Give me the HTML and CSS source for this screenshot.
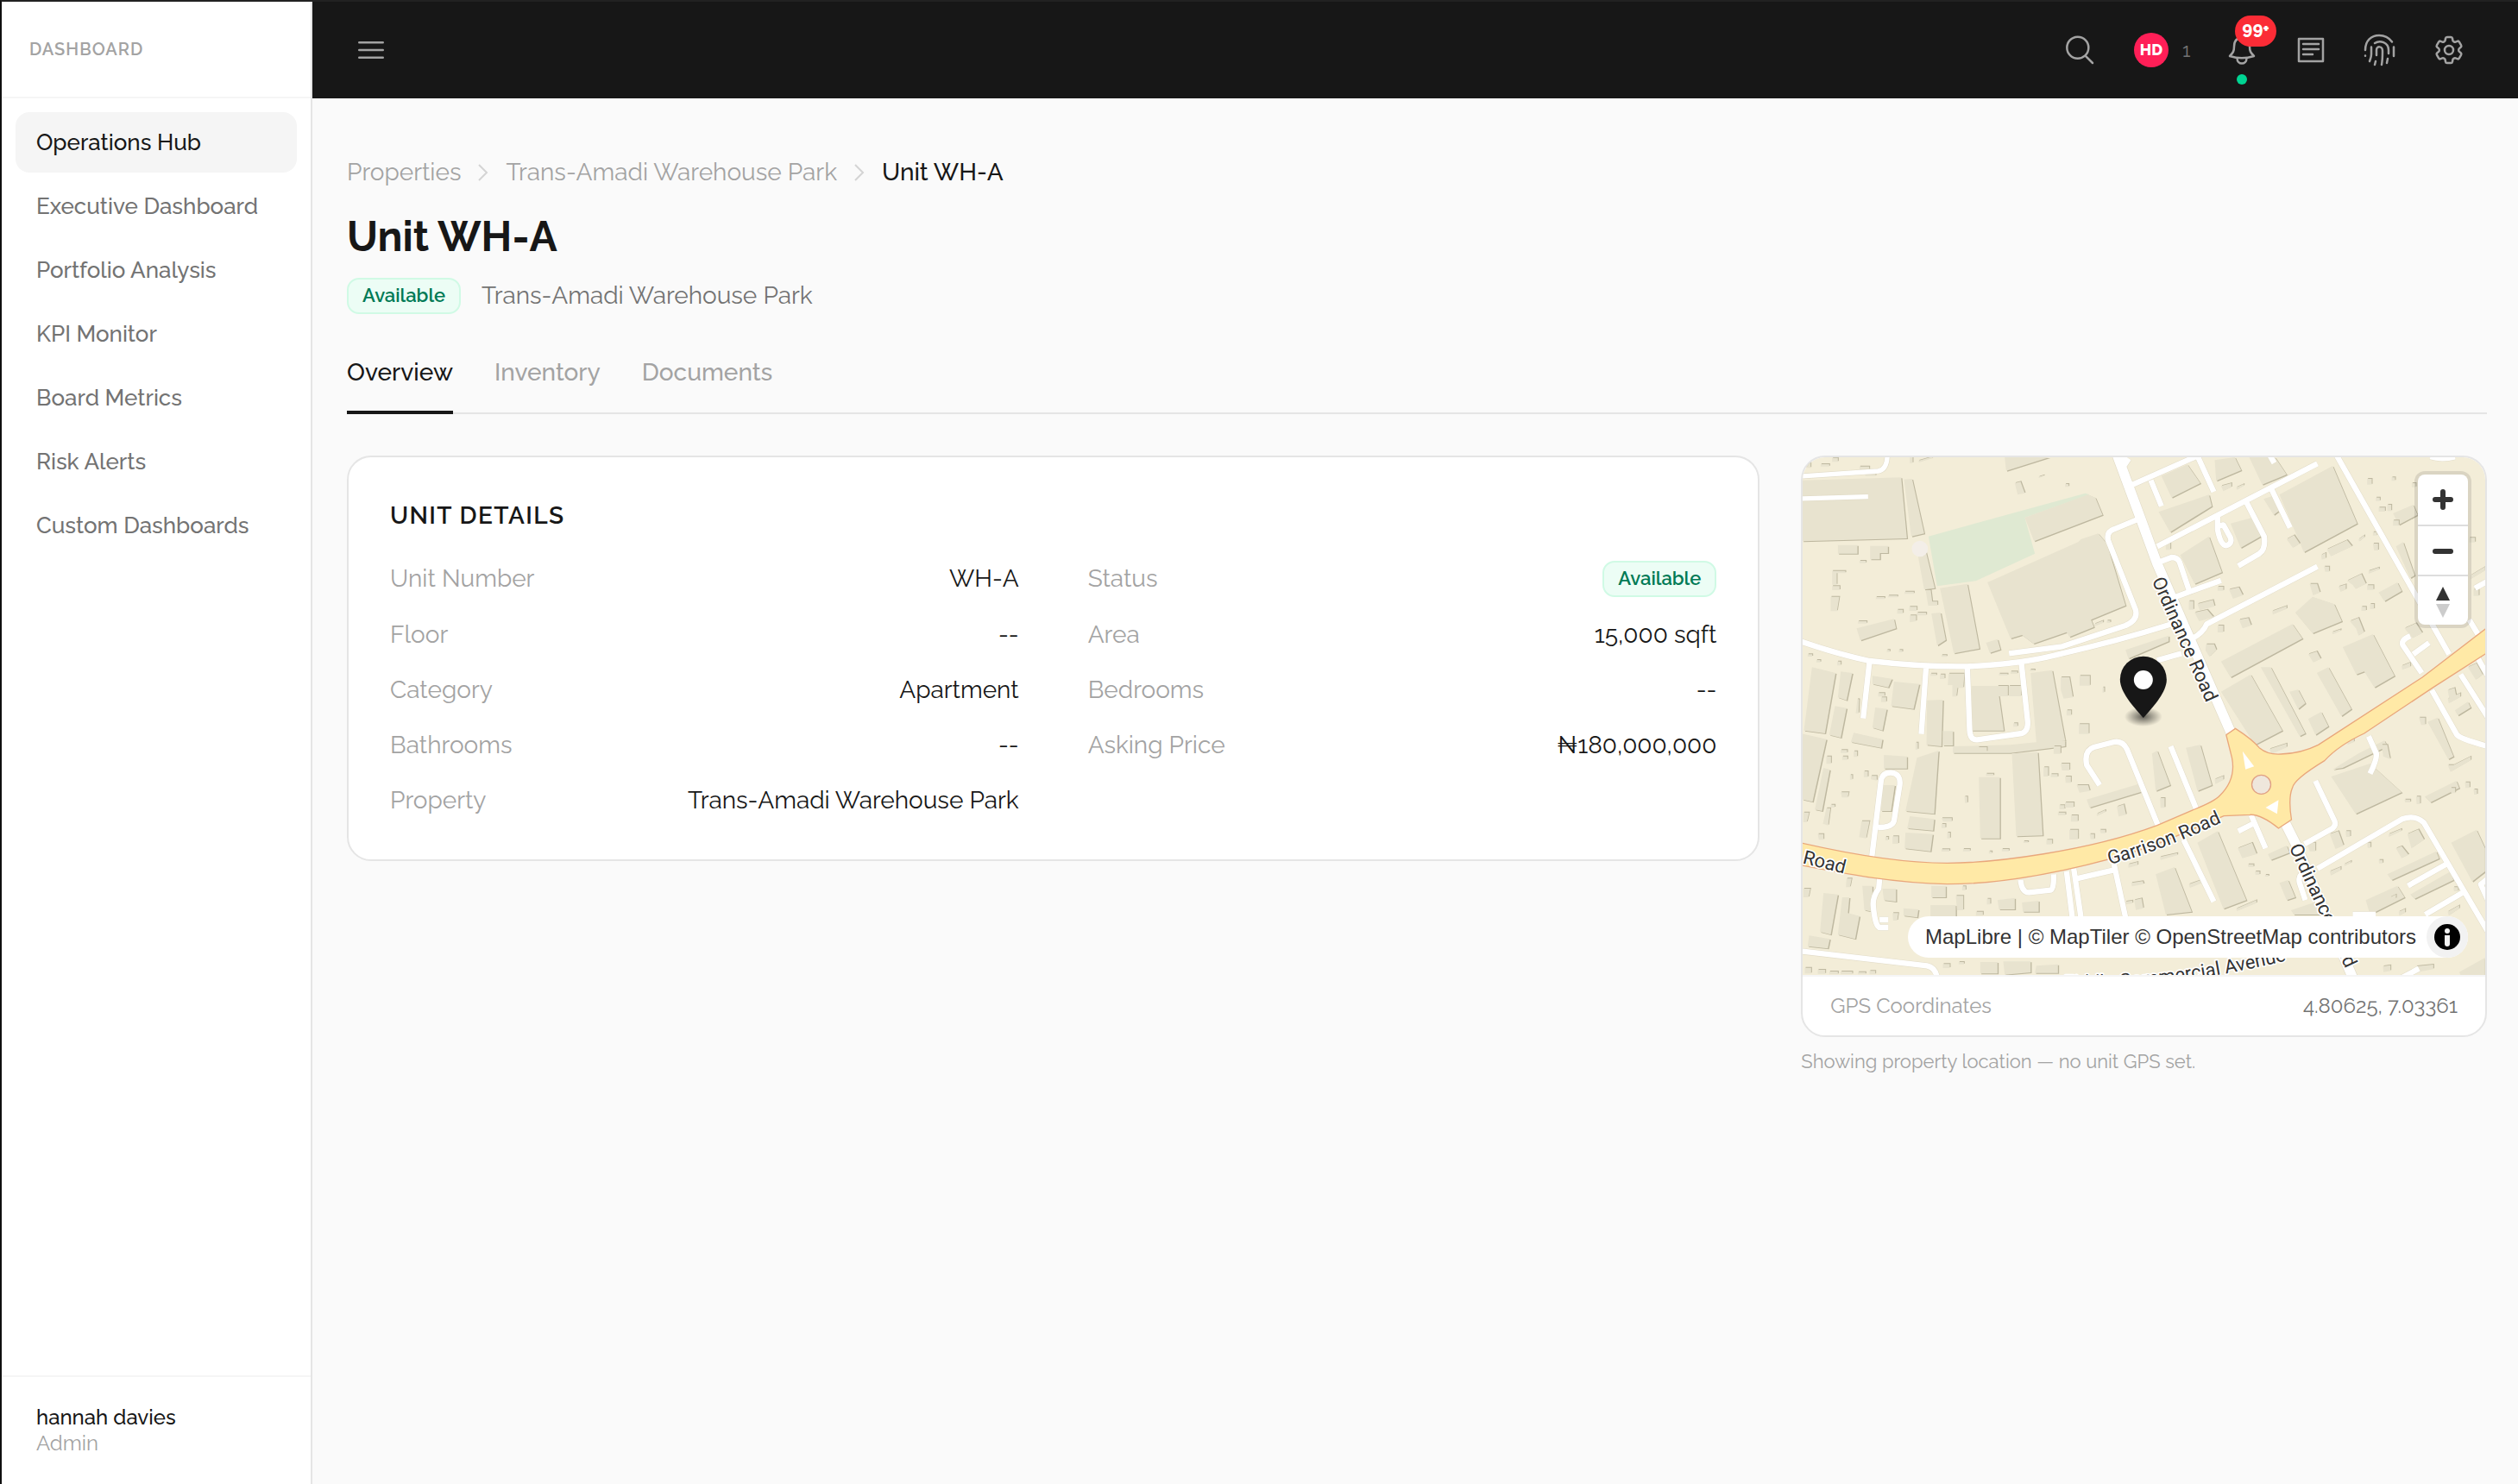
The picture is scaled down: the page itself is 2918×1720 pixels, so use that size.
FILE: index.html
```html
<!DOCTYPE html>
<html lang="en">
<head>
<meta charset="utf-8">
<meta name="viewport" content="width=device-width, initial-scale=1">
<title>Unit WH-A</title>
<link rel="stylesheet" href="styles.css">
</head>

<body>
<aside class="sidebar">
	<div class="sidebar-title">DASHBOARD</div>
	<nav class="menu">
		<a class="active" href="#">Operations Hub</a>
		<a href="#">Executive Dashboard</a>
		<a href="#">Portfolio Analysis</a>
		<a href="#">KPI Monitor</a>
		<a href="#">Board Metrics</a>
		<a href="#">Risk Alerts</a>
		<a href="#">Custom Dashboards</a>
	</nav>
	<div class="user">
		<div class="user-name">hannah davies</div>
		<div class="user-role">Admin</div>
	</div>
</aside>

<div class="page">
	<header class="topbar">
		<button class="icon-btn" type="button" aria-label="Toggle menu"><svg viewBox="0 0 24 24"><path d="M3.75 6.75h16.5M3.75 12h16.5M3.75 17.25h16.5"/></svg></button>
		<div class="tools">
			<button class="icon-btn" type="button" aria-label="Search"><svg viewBox="0 0 24 24"><path d="m21 21-5.2-5.2A7.5 7.5 0 1 0 5.2 5.2a7.5 7.5 0 0 0 10.6 10.6z"/></svg></button>
			<div class="online"><span class="avatar">HD</span><span class="online-count">1</span></div>
			<button class="icon-btn" type="button" aria-label="Notifications">
				<svg class="big-box" viewBox="0 0 40 40"><path d="M20 6c-6 0-9 4-9 10 0 5-1 7-5 11 9 3 19 3 28 0-4-4-5-6-5-11 0-6-3-10-9-10z"/><path d="M14.5 29.5c0 8 11 8 11 0"/></svg>
				<span class="badge">99<sup>+</sup></span>
				<span class="dot"></span>
			</button>
			<button class="icon-btn" type="button" aria-label="News"><svg class="big-box" viewBox="0 0 40 40"><path d="M6 7h28v26H6zM11 13h18M11 19h18M11 25h11"/></svg></button>
			<button class="icon-btn" type="button" aria-label="Sign in activity"><svg class="big-box" viewBox="0 0 40 40"><path d="M3 20C3 9 10 3 19 3c6 0 11 2 15 7.5M3 26.6v.2M36 16.5V27M14 12c6-4 16-1 16 8v4M29 30l-1 5M10 16.5V25c0 3-1 5-2 8M16 26v-6c0-5 7-5 7 1 0 6 0 11-1 16M15 33l-1 4"/></svg></button>
			<button class="icon-btn" type="button" aria-label="Settings"><svg viewBox="0 0 24 24"><path d="M9.594 3.94c.09-.542.56-.94 1.11-.94h2.593c.55 0 1.02.398 1.11.94l.213 1.281c.063.374.313.686.645.87.074.04.147.083.22.127.325.196.72.257 1.075.124l1.217-.456a1.125 1.125 0 0 1 1.37.49l1.296 2.247a1.125 1.125 0 0 1-.26 1.431l-1.003.827c-.293.241-.438.613-.43.992a7.723 7.723 0 0 1 0 .255c-.008.378.137.75.43.991l1.004.827c.424.35.534.955.26 1.43l-1.298 2.247a1.125 1.125 0 0 1-1.369.491l-1.217-.456c-.355-.133-.75-.072-1.076.124a6.47 6.47 0 0 1-.22.128c-.331.183-.581.495-.644.869l-.213 1.281c-.09.543-.56.94-1.11.94h-2.594c-.55 0-1.019-.398-1.11-.94l-.213-1.281c-.062-.374-.312-.686-.644-.87a6.52 6.52 0 0 1-.22-.127c-.325-.196-.72-.257-1.076-.124l-1.217.456a1.125 1.125 0 0 1-1.369-.49l-1.297-2.247a1.125 1.125 0 0 1 .26-1.431l1.004-.827c.292-.24.437-.613.43-.991a6.932 6.932 0 0 1 0-.255c.007-.38-.138-.751-.43-.992l-1.004-.827a1.125 1.125 0 0 1-.26-1.43l1.297-2.247a1.125 1.125 0 0 1 1.37-.491l1.216.456c.356.133.751.072 1.076-.124.072-.044.146-.086.22-.128.332-.183.582-.495.644-.869l.214-1.28Z"/><circle cx="12" cy="12" r="3"/></svg></button>
		</div>
	</header>

	<main>
		<nav class="crumbs" aria-label="Breadcrumb">
			<a href="#">Properties</a>
			<svg viewBox="0 0 12 20"><path d="M1 1l9 9-9 9"/></svg>
			<a href="#">Trans-Amadi Warehouse Park</a>
			<svg viewBox="0 0 12 20"><path d="M1 1l9 9-9 9"/></svg>
			<span>Unit WH-A</span>
		</nav>
		<h1>Unit WH-A</h1>
		<div class="subtitle"><span class="status">Available</span><span>Trans-Amadi Warehouse Park</span></div>

		<div class="tabs" role="tablist">
			<button class="active" type="button" role="tab">Overview</button>
			<button type="button" role="tab">Inventory</button>
			<button type="button" role="tab">Documents</button>
		</div>

		<div class="columns">
			<section class="card details">
				<h2>UNIT DETAILS</h2>
				<dl>
					<div><dt>Unit Number</dt><dd>WH-A</dd></div>
					<div><dt>Status</dt><dd><span class="status">Available</span></dd></div>
					<div><dt>Floor</dt><dd>--</dd></div>
					<div><dt>Area</dt><dd>15,000 sqft</dd></div>
					<div><dt>Category</dt><dd>Apartment</dd></div>
					<div><dt>Bedrooms</dt><dd>--</dd></div>
					<div><dt>Bathrooms</dt><dd>--</dd></div>
					<div><dt>Asking Price</dt><dd>₦180,000,000</dd></div>
					<div><dt>Property</dt><dd>Trans-Amadi Warehouse Park</dd></div>
				</dl>
			</section>

			<section class="location">
				<div class="card">
					<div class="map">
						<svg class="tiles" viewBox="57 60 2373 1800" preserveAspectRatio="xMidYMid slice">
							<defs>
								<radialGradient id="pinShadow"><stop offset="0" stop-color="#000" stop-opacity=".6"/><stop offset="1" stop-color="#000" stop-opacity="0"/></radialGradient>
								<!-- large buildings -->
								<g id="blocks">
									<path d="M57 140L400 130 420 342 57 352zM410 137L438 135 480 325 435 335zM180 365h68v30h-68zM292 368h62v25h-28v22h-34zM458 400L485 385 517 515 480 520zM535 515L630 500 672 725 583 742z"/>
									<path d="M700 495L1015 355 1025 345 1085 325 1115 360 1180 575 1060 625 1070 650 985 685 975 668 860 708 820 678 780 690zM830 270L1050 190 1075 200 1100 260 862 352zM245 655L375 622 382 655 258 697zM505 603L537 600 555 695 525 715zM760 60H915L765 107z"/>
									<path d="M90 790L172 810 135 1020 62 1010zM190 805L230 810 210 905 180 895zM170 925L210 932 190 1035 150 1025zM375 840L463 848 443 935 365 925zM645 855H735L757 1010H645zM850 810L925 800 970 1045 870 1050zM490 905L545 903 540 1065 488 1060zM695 705L735 692 745 728 708 740zM300 820L368 830 355 860 300 848zM310 930L350 935 335 1010 300 1000zM235 1018L335 1040 330 1070 225 1050zM545 1012h35v50h-35zM580 1065L780 1060 970 1040V1065L780 1088H580z"/>
									<path d="M50 1020L140 1040 92 1258 57 1250zM455 1105L530 1080 515 1300 415 1290zM670 1172H743V1385H675zM785 1090L875 1085 892 1375 800 1378zM340 1095L420 1100V1142H340zM335 1200L378 1200 365 1290 330 1290zM130 1140L152 1146 125 1290 100 1285zM130 1575L180 1580 155 1720 118 1710zM195 1590H220L215 1645 255 1655 240 1735 180 1720zM335 1560H382V1605L340 1600zM80 1723L152 1735 145 1768 75 1760zM502 1617H590V1660H502zM505 1550h50v40h-50zM735 1600l60-8v40h-55zM820 1608l58-6v38h-55zM1045 1250L1230 1195 1240 1222 1055 1278zM415 1365l95 5-8 60-90-10zM430 1308l85 10-4 40-90-8zM265 1550h35v90l-28-6zM408 1628l52 4-4 28-48-6zM675 1815h60v40h-60zM755 1813h95v38l-90 8zM870 1828l75-5v30h-80z"/>
									<path d="M1305 125L1395 85 1440 150 1340 200zM1490 70L1560 60 1582 105 1495 142zM1715 190L1900 90 1985 290 1800 390zM1370 400L1470 335 1515 460 1420 500zM1512 770L1760 640 1795 690 1545 825zM1512 875L1615 815 1725 1010 1630 1060zM1650 790L1685 790 1805 1020 1785 1030zM1845 810L1885 790 1965 935 1930 960zM1935 720L2040 675 2115 820 2045 860 2010 805 1982 815zM1770 600L1830 545 1905 570 1932 630 1830 672zM2230 980L2265 965 2320 1100 2302 1110zM1295 250L1470 190 1480 230 1335 320zM1610 60H1700L1740 120 1655 155zM1545 290L1620 270 1650 335 1580 375zM1750 875L1780 868 1805 915 1780 935zM2110 255L2180 225 2195 260 2130 295zM2120 370L2145 355 2185 470 2170 480zM2060 530L2125 495 2140 525 2080 560zM1815 970L1860 945 1885 995 1840 1025zM1660 205L1690 195 1715 245 1695 260zM2325 940L2370 910 2380 930 2335 958zM1180 730L1330 680V700L1190 760z"/>
									<path d="M2312 1400L2400 1355 2430 1420 2430 1500 2385 1535zM1895 1170L2030 1125 2140 1225 1980 1300zM1430 1400L1500 1360 1600 1600 1520 1630zM1285 1510L1350 1485 1410 1640 1320 1650zM1390 1070L1440 1060 1480 1200 1430 1220zM1272 1090L1290 1080 1335 1200 1285 1220zM1755 1635L1860 1600 1870 1650H1765zM2090 1510L2260 1430 2270 1455 2105 1530zM2170 1580L2310 1500 2320 1530 2185 1595zM2015 1600L2125 1550 2150 1590 2030 1650zM1900 1145L1990 1090 2080 1045 2090 1065 1935 1140zM2340 1850L2430 1800V1860H2345zM1675 1440L1740 1410 1750 1435 1685 1460zM2220 1240L2330 1185 2340 1210 2240 1260zM1715 1540L1745 1530 1770 1590 1740 1600z"/>
								</g>
								<!-- sheds and small houses -->
								<g id="houses">
									<path d="M65 72h20v25h-20zM120 84h30v8h-30zM160 62h20v14h-20zM255 92h34v12h-34zM275 115h36v10h-36zM430 60h10v20h-10zM460 72l48-14v6l-46 14zM795 150l20-5 15 40-25 5zM878 128l18-6v4l-18 6zM970 153h12v10h-12zM255 420h22v8h-22zM160 455h46v8h-30v40h-16zM160 508h26v14h-26zM155 545h30l-8 50h-22zM312 546h30v7h-30zM355 541h32v6h-32zM412 527h32v8h-32zM485 522h18l5 40h18v14h-32zM386 590h20v14h-20zM428 580h26v14h-26zM430 610h22v20l-22 4zM455 600h32v10h-32zM250 630h30v8h-30zM1072 640l30-12v8l-30 12zM1115 628h12v8h-12z"/>
									<path d="M75 745h16v8h-16zM105 765h14v8h-14zM178 770h12v14h-12zM350 730h10v7h-10zM392 730h12v8h-12zM540 748h18v6h-18zM502 812h20v8h-20zM535 815h16v16h-16zM565 812h55l-4 50h-20l-4 30h-14v-40h-16zM740 812h30v6h-30zM780 805h24v8h-24zM848 798h16v6h-16zM248 900l-6 50h10l2-48zM320 880h22v12h-22zM330 895h18v16h-18zM735 855h36v36h-36zM775 855h42v36h-42zM955 825h30l12 70-32 4-10-30zM1020 820h36v34h-36zM975 940h16v18h-16zM1018 988h34v34h-34zM1100 860h6v18h-6zM790 985h14v12h-14zM930 1065h24v26h-24zM668 1068h30v16h-30zM450 1052h8v24h-8zM190 1078h22v10h-22zM195 1100h18v12h-18z"/>
									<path d="M140 1100h16v26h-16zM235 1082h12v20h-12zM270 1152h14v20h-14zM295 1168h20v16l-20-4zM190 1225h28l-4 18h-20zM222 1165h8v16h-8zM60 1295h20l-8 34h-12zM140 1280h14l-8 60-18-6zM155 1268h14v10h-14zM262 1325h28l-12 60-24-4zM110 1370h20v20h-16zM345 1380h10v12h-10zM370 1378h20v26h-20zM540 1315h36v12h-30zM540 1335h14v14h-14zM560 1365h10v20h-10zM540 1423h28v8h-28zM615 1422h24v8h-24zM705 1430h10v8h-10zM750 1422h24v8h-24zM825 1395h16v6h-16zM905 1390h20v16h-20zM985 1355h30v34h-30zM950 1270h18v14h-18zM970 1260h30v18h-30zM945 1295h26v10h-26zM990 1305h24v22h-24zM895 1138h16v32h-16zM920 1162h24v10h-24zM955 1125h30v24h-26zM970 1170h20v22h-18zM620 1240h10v22h-8zM695 1160h26v8h-26zM1010 1200h40l6 20-36 6zM1080 1300l30-14v8l-30 14zM1150 1275l24-8 8 36-26 6zM1055 1370h16v18h-12zM1090 1355h20v12h-16z"/>
									<path d="M60 1560h24l-6 30h-18zM210 1525h18l-6 30h-14zM370 1645h20l-4 26h-14zM590 1585h26v50h-22zM612 1552h12v14h-12zM698 1595h12v20h-12zM660 1640h24v14h-24zM545 1822h24v14h-24zM600 1815h18v8h-18zM65 1835h22v20h-22zM110 1842h26v14h-26zM150 1848h30v10h-30zM190 1848h40v10h-40zM250 1850h26v8h-26zM290 1846h20v12h-20zM1190 1475l32-8v12l-32 8zM1200 1540l40-6 4 10-42 8zM1180 1605l24-4v10l-24 4zM1210 1600l26-6 6 34-26 6zM1300 1450l60-14v8l-58 16z"/>
									<path d="M1512 160l36-10v14l-28 14zM1565 165l26-12v6l-24 14zM1740 345l26-14 20 30-24 14zM1860 400l16-8v20l-14 4zM1880 380l70-32 18 22-74 34zM1990 345l20-14v8l-18 14zM1920 510l26-8v18l-18 8zM1950 490l50-24 16 34-36 18-10-14zM2020 505h22v16h-22zM1820 500h26l10 30-24 10zM1870 440h18v18h-14zM2025 455l36-12v8l-36 14zM2040 360h18v24h-14zM2000 580h16v14h-16zM2030 570h14v18h-14zM2040 320h14v12h-14zM1960 630l30-12 20 50-20 12-8-24zM1898 668l30-10v6l-28 12zM2020 135h16v20h-16zM2105 130h12v12h-12zM2050 200h14v12h-14zM2060 235h22v14h-22zM2090 225h14v22h-14zM2110 280h20v18h-20zM2175 150h14v14h-14zM2150 655l40-18 22 34-34 18-10-12zM2140 785l30-12v16l-28 10zM2375 340h20v16h-20zM2380 470l50-30v14l-50 30zM2390 520h18v22h-18zM1690 595l50-18v10l-48 20zM1575 625l32-6 10 26-30 10zM1500 645h20v24h-20zM1460 710h28l8 20-24 24-14-22zM1430 570l54-14 6 22-52 14zM1420 600l44-10 22 26-50 14zM1540 520l34-8 14 28-34 12zM1500 510h20v14h-20zM1400 560h16v30h-16zM1815 745l30-10 14 26-26 12zM1320 360h16v22h-16z"/>
									<path d="M2300 870l24-8 6 30-24 8zM2300 900l44-20v14l-40 22zM2370 790l30-14 22 40-24 18zM2200 965h22v26h-14zM1680 1075l60-20v14l-52 22zM1950 1040h24v10l-22 10zM2070 1060h20l10 50-24-10zM2300 1130h20l60-30v14l-70 40zM2150 1250h20v10h-18zM2190 1240h14v26h-12zM2310 1210h16v18h-14zM2360 1190h16v20h-14zM2390 1215h12v18h-10zM1490 1180l30-12v14l-28 14zM1300 1245h16v34h-14zM2095 1370l44-18v8l-44 20zM2120 1420l20-8 24 30-24 12zM2160 1370l38-16 20 36-44 30zM1890 1500l38-16v12l-34 18zM1940 1475l24-12v8l-22 10zM2020 1400h12v18h-10zM2060 1460h14v12h-12zM1890 1370l30-10 18 50-28 12zM1945 1360h16v20h-14zM2100 1590l20-10v14l-16 8zM2130 1640l22-10v14l-20 10zM1810 1400h30v30h-20zM1570 1420l50-20 16 40-50 14zM1605 1475h20v10h-18zM1630 1500h16v12h-14zM1665 1512h12v6h-12zM1565 1630l70-30v10l-68 28zM2300 1640l40-22v12l-36 24zM2075 1830l26-4v20l-24 4zM2190 1830l60-6v16l-54 10zM1400 1545l44-16v12l-40 16zM2320 1555h16v14h-14z"/>
								</g>
								<g id="roads">
									<path d="M50 126L320 108Q352 103 352 50M50 204L285 197"/>
									<path class="mid" d="M50 700Q180 745 290 768 480 790 630 787 820 780 960 742 1150 700 1340 640M1290 766L1375 742M775 742L960 718 1180 645Q1225 625 1215 590L1120 350Q1112 320 1140 310L1225 275M1205 155L1430 55M290 770L268 968M487 785L470 1022M630 790L638 1010Q640 1045 665 1042L820 1020Q842 1012 840 980L818 775"/>
									<path class="mid" d="M298 1450L330 1185Q335 1155 365 1157 400 1160 395 1200L375 1325Q368 1348 320 1347M325 1525L322 1560Q300 1590 303 1620 310 1700 330 1695H355M325 1668H355M57 1778L490 1828Q520 1835 525 1870M815 1530Q820 1575 845 1573L920 1565Q932 1560 930 1510M975 1500L995 1660M1000 1490L1025 1660M1010 1525L1140 1495M1140 1475L1180 1660M1090 1200L1045 1130Q1035 1080 1070 1068L1140 1050Q1170 1045 1185 1075L1292 1338M1337 1065L1427 1285M1382 1390L1487 1605"/>
									<path class="mid" d="M1617 1305L1667 1420M1572 1360L1622 1335M1802 1405L1900 1350Q1912 1340 1907 1325L1840 1185M1847 1490L2142 1318Q2185 1302 2217 1330L2440 1710M2162 1550L2300 1472M2222 1650L2350 1575M1805 1600L1785 1540Q1780 1520 1795 1505M2440 1600L2415 1545 2440 1525M2025 1030L2052 1090Q2055 1110 2030 1160M2140 1870L2200 1838M1970 1650H2050"/>
									<path class="mid" d="M1912 50L2305 745M2245 870L2332 1025Q2345 1040 2440 1065M2345 815L2440 965M2375 625L2405 675M2170 682Q2135 695 2145 715L2210 810M2180 745L2235 705M2395 515L2440 490M2400 750L2440 820"/>
									<path class="mid" d="M1290 370L1847 82M1430 55L1487 180M1268 140L1305 230M1597 210L1662 335Q1668 380 1645 395L1572 438M1687 170L1752 305M1500 265V310Q1510 365 1530 367 1552 360 1545 340L1520 295 1500 300M1295 425L1340 408Q1362 408 1368 425L1400 520M1355 545L1512 488M1412 690Q1450 670 1462 640L1847 440M1680 50L1697 80M2240 58Q2280 70 2325 58"/>
									<path class="wide" d="M1150 50L1235 280 1290 430 1545 1015M1737 1335L1772 1405 1970 1870M1165 90L1185 60"/>
								</g>
							</defs>
							<rect class="land" x="0" y="0" width="2500" height="1900"/>
							<path class="park" d="M495 335L1040 185 1055 190 830 270 865 395 660 490 525 508z"/>
							<use class="shade" href="#blocks" x="4" y="3"/>
							<use class="built" href="#blocks"/>
							<use class="shade" href="#houses" x="3" y="-3"/>
							<use class="built" href="#houses"/>
							<circle cx="465" cy="378" r="28" fill="#f3eee8"/>
							<use class="road-edge" href="#roads"/>
							<use class="road" href="#roads"/>
							<path class="highway" d="M40 1398C200 1435 400 1471 560 1471S1050 1430 1290 1340L1420 1284Q1490 1256 1508 1236 1565 1180 1550 1105L1530 1025 1562 1003Q1620 1040 1645 1070 1675 1095 1720 1092 1790 1090 1850 1060L2212 825 2440 650V738L2250 860 2010 1020Q1920 1062 1872 1115 1765 1180 1760 1210 1745 1245 1757 1320L1712 1350Q1650 1300 1612 1303L1522 1307Q1400 1360 1272 1412C1130 1460 830 1544 560 1544 380 1540 210 1510 40 1476z"/>
							<circle class="island" cx="1652" cy="1198" r="33"/>
							<path fill="#fff" d="M1587 1082L1627 1135 1597 1145zM1667 1278L1712 1252 1707 1300z"/>
							<g class="names">
								<text transform="translate(1271 488) rotate(66)">Ordinance Road</text>
								<text transform="translate(1748 1416) rotate(65)">Ordinance Road</text>
								<text transform="translate(55 1471) rotate(14)">Road</text>
								<path id="garrison" d="M1124 1476Q1300 1432 1560 1308" fill="none" stroke="none"/>
								<text><textPath href="#garrison">Garrison Road</textPath></text>
								<path id="fiddle" d="M965 1908Q1350 1915 1860 1780" fill="none" stroke="none"/>
								<text><textPath href="#fiddle">Fiddle Commercial Avenue</textPath></text>
							</g>
							<ellipse cx="1242" cy="962" rx="66" ry="34" fill="url(#pinShadow)"/>
							<path fill="#171717" d="M1242 752a81 81 0 0 1 81 81c0 42-44 92-81 133-37-41-81-91-81-133a81 81 0 0 1 81-81z"/>
							<circle cx="1242" cy="834" r="33" fill="#fff"/>
						</svg>
						<div class="zoom">
							<button type="button" aria-label="Zoom in"><svg viewBox="0 0 58 58"><path d="M29 20v18M20 29h18"/></svg></button>
							<button type="button" aria-label="Zoom out"><svg viewBox="0 0 58 58"><path d="M20 29h18"/></svg></button>
							<button type="button" aria-label="Reset bearing"><svg class="compass" viewBox="0 0 58 58"><path d="M21 28l8-16 8 16z"/><path class="south" d="M21 32l8 16 8-16z"/></svg></button>
						</div>
						<div class="credits">
							<span><a href="#">MapLibre</a> | <a href="#">© MapTiler</a> <a href="#">© OpenStreetMap contributors</a></span>
							<button type="button" aria-label="Toggle attribution"><svg viewBox="0 0 48 48"><circle cx="24" cy="24" r="15"/><path fill="#f2f2f2" d="M21 22h6v10a3 3 0 0 1-6 0z"/><circle fill="#f2f2f2" cx="24" cy="17" r="3"/></svg></button>
						</div>
					</div>
					<div class="gps"><span>GPS Coordinates</span><span class="gps-value">4.80625, 7.03361</span></div>
				</div>
				<p class="note">Showing property location — no unit GPS set.</p>
			</section>
		</div>
	</main>
</div>
</body>
</html>
```
FILE: styles.css
```css
*{ margin:0; padding:0; box-sizing:border-box;}
body{ display:grid; grid-template-columns:360px 1fr; min-height:100vh; border-top:2px solid #222; border-left:2px solid #0f0f0f; background:#fafafa; color:#171717; font:28px/40px Raleway, Lato, sans-serif;}
a{ color:inherit; text-decoration:none;}
button{ border:0; background:none; font:inherit; color:inherit; cursor:pointer;}
svg{ display:block;}

/* sidebar */
.sidebar{ display:flex; flex-direction:column; background:#fff; border-right:2px solid #e5e5e5;}
.sidebar-title{ height:112px; padding-left:32px; border-bottom:2px solid #f5f5f5; font-size:20px; line-height:110px; font-weight:600; color:#a3a3a3; letter-spacing:.05em;}
.menu{ flex:1; display:flex; flex-direction:column; gap:4px; padding:16px;}
.menu a{ padding:0 24px; border-radius:16px; font-size:26px; line-height:70px; font-weight:500; color:#737373;}
.menu .active{ background:#f5f5f5; color:#171717;}
.user{ padding:32px 40px; border-top:2px solid #f5f5f5; font-size:24px; line-height:30px;}
.user-name{ font-weight:500;}
.user-role{ color:#a3a3a3;}

/* top bar */
.topbar{ display:flex; justify-content:space-between; align-items:center; height:112px; padding:0 44px 0 32px; background:#171717; color:#a3a3a3;}
.tools{ display:flex; align-items:center; gap:8px;}
.icon-btn{ position:relative; display:flex; align-items:center; justify-content:center; width:72px; height:72px;}
.icon-btn svg{ width:40px; height:40px; fill:none; stroke:currentColor; stroke-width:1.5; stroke-linecap:round; stroke-linejoin:round;}
.icon-btn .big-box{ stroke-width:2.5;}
.online{ display:flex; align-items:center; gap:16px; width:100px; padding-left:19px;}
.avatar{ width:40px; height:40px; border-radius:50%; background:#ff1f57; color:#fff; font-size:18px; font-weight:800; text-align:center;}
.online-count{ color:#737373; font-size:22px;}
.badge{ position:absolute; left:28px; top:-4px; width:48px; height:36px; border-radius:18px; background:#fb2c36; color:#fff; font-size:20px; line-height:36px; font-weight:800; text-align:center; font-feature-settings:"lnum";}
.badge sup{ line-height:18px; vertical-align:4px; font-weight:900;}
.dot{ position:absolute; left:30px; top:64px; width:12px; height:12px; border-radius:50%; background:#00d492;}

/* heading */
main{ padding:66px 36px 64px 40px;}
.crumbs{ display:flex; align-items:center; gap:20px; color:#a3a3a3;}
.crumbs svg{ width:12px; height:20px; fill:none; stroke:#d4d4d4; stroke-width:2;}
.crumbs span{ color:#171717; font-weight:500;}
h1{ margin:22px 0 16px; font-size:48px; line-height:64px; font-weight:700;}
.subtitle{ display:flex; align-items:center; gap:24px; color:#737373;}
.status{ display:block; padding:3px 16px 5px; border:2px solid #d0fae5; border-radius:14px; background:#ecfdf5; color:#007a55; font-size:22px; line-height:30px; font-weight:600;}
.tabs{ display:flex; gap:48px; margin:48px 0; box-shadow:inset 0 -2px #e5e5e5;}
.tabs button{ padding-bottom:24px; border-bottom:4px solid transparent; color:#a3a3a3; font-weight:500;}
.tabs .active{ border-color:#171717; color:#171717;}

/* cards */
.columns{ display:grid; grid-template-columns:repeat(3, 1fr); gap:48px; align-items:start;}
.card{ border:2px solid #e5e5e5; border-radius:28px; background:#fff; overflow:hidden;}
.details{ grid-column:span 2; padding:48px;}
h2{ margin-bottom:32px; font-size:28px; line-height:40px; font-weight:600; letter-spacing:.05em;}
dl{ display:grid; grid-template-columns:1fr 1fr; gap:24px 80px;}
dl div{ display:flex; align-items:center; justify-content:space-between;}
dt{ color:#a3a3a3;}

/* map */
.map{ position:relative; height:600px;}
.tiles{ width:100%; height:100%;}
.land{ fill:#f3edd8;}
.park{ fill:#dfe9d2;}
.built{ fill:#e8e3cf;}
.shade{ fill:#beb8a0;}
.road, .road-edge{ fill:none; stroke-width:16px; stroke-linejoin:round;}
.road{ stroke:#fff; --mid:19px; --wide:34px;}
.road-edge{ stroke:#e2dcc8; stroke-width:20px; --mid:22px; --wide:38px;}
.mid{ stroke-width:var(--mid);}
.wide{ stroke-width:var(--wide);}
.highway{ fill:#ffe9a6; stroke:#e9a77c; stroke-width:4px;}
.island{ fill:#efe7dc; stroke:#e0a184; stroke-width:4px;}
.names{ font:66px Roboto, sans-serif; fill:#333; stroke:#fff; stroke-width:10px; stroke-linejoin:round; paint-order:stroke;}
.zoom{ position:absolute; top:20px; right:20px; width:58px; border-radius:8px; background:#fff; box-shadow:0 0 0 4px rgba(0,0,0,.1); overflow:hidden;}
.zoom button{ display:block; width:58px; height:58px;}
.zoom button + button{ border-top:2px solid #ddd;}
.zoom svg{ width:58px; height:58px; fill:none; stroke:#333; stroke-width:6; stroke-linecap:round;}
.zoom .compass{ fill:#333; stroke:none;}
.compass .south{ fill:#ccc;}
.credits{ position:absolute; right:20px; bottom:20px; display:flex; height:48px; padding-left:20px; border-radius:24px; background:#fff; color:#333; font:24px/48px "Liberation Sans", sans-serif; white-space:nowrap;}
.credits button{ width:48px; height:48px; margin-left:12px; border-radius:50%; background:#f2f2f2;}
.gps{ display:flex; justify-content:space-between; padding:14px 32px; border-top:2px solid #f5f5f5; color:#a3a3a3; font-size:24px;}
.gps-value{ color:#737373;}
.note{ margin-top:12px; color:#a3a3a3; font-size:22px; line-height:32px;}
```
